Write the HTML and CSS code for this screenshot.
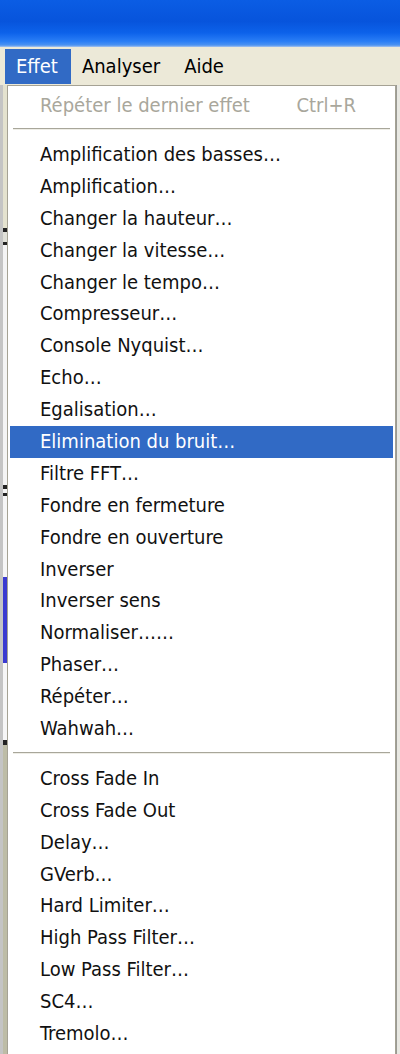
FILE: index.html
```html
<!DOCTYPE html>
<html>
<head>
    <title>Effet</title>
    <link rel="stylesheet" href="styles.css">
</head>
<body>
    <div class="titlebar"></div>

    <!-- Menu bar -->
    <div class="menubar">
        <span class="menubar-item active">Effet</span>
        <span class="menubar-item">Analyser</span>
        <span class="menubar-item">Aide</span>
    </div>

    <div class="workspace">
        <div class="side-left"></div>

        <!-- Effet dropdown -->
        <ul class="menu">
            <li class="menu-item disabled"><span>Répéter le dernier effet</span><span class="shortcut">Ctrl+R</span></li>
            <li class="separator"></li>
            <li class="menu-item">Amplification des basses…</li>
            <li class="menu-item">Amplification…</li>
            <li class="menu-item">Changer la hauteur…</li>
            <li class="menu-item">Changer la vitesse…</li>
            <li class="menu-item">Changer le tempo…</li>
            <li class="menu-item">Compresseur…</li>
            <li class="menu-item">Console Nyquist…</li>
            <li class="menu-item">Echo…</li>
            <li class="menu-item">Egalisation…</li>
            <li class="menu-item selected">Elimination du bruit…</li>
            <li class="menu-item">Filtre FFT…</li>
            <li class="menu-item">Fondre en fermeture</li>
            <li class="menu-item">Fondre en ouverture</li>
            <li class="menu-item">Inverser</li>
            <li class="menu-item">Inverser sens</li>
            <li class="menu-item">Normaliser……</li>
            <li class="menu-item">Phaser…</li>
            <li class="menu-item">Répéter…</li>
            <li class="menu-item">Wahwah…</li>
            <li class="separator"></li>
            <li class="menu-item">Cross Fade In</li>
            <li class="menu-item">Cross Fade Out</li>
            <li class="menu-item">Delay…</li>
            <li class="menu-item">GVerb…</li>
            <li class="menu-item">Hard Limiter…</li>
            <li class="menu-item">High Pass Filter…</li>
            <li class="menu-item">Low Pass Filter…</li>
            <li class="menu-item">SC4…</li>
            <li class="menu-item">Tremolo…</li>
        </ul>

        <div class="side-right"></div>
    </div>
</body>
</html>
```

FILE: styles.css
```css
body {
    margin: 0;
    width: 400px;
    height: 1054px;
    overflow: hidden;
    background-color: #ffffff;
    font-family: "DejaVu Sans Condensed", "DejaVu Sans", sans-serif;
    font-stretch: condensed;
    font-size: 20px;
    color: #111;
}

/* --- Window title bar (only the bottom is visible) --- */
.titlebar {
    height: 47px;
    background: linear-gradient(#0b5de4 0%, #0754dc 45%, #0d62ea 70%, #2a7ef6 88%, #4c93f2 96%, #a8c4ee 100%);
}

/* --- Menu bar --- */
.menubar {
    display: flex;
    height: 35px;
    padding: 2px 0 1px 5px;
    background-color: #ece9d8;
}

.menubar-item {
    padding: 0 13px 0 11px;
    line-height: 35px;
    color: #000;
}

.menubar-item.active {
    background-color: #316ac5;
    color: #fff;
}

/* --- Area under the menu bar --- */
.workspace {
    display: flex;
    height: 969px;
}

.side-left {
    width: 7px;
    flex-shrink: 0;
    background:
        linear-gradient(to right, #c4c4c4 0 3px, transparent 3px),
        linear-gradient(#e4e2cf 0, #e4e2cf 143px, #222 143px, #222 147px, #e0e0d8 147px, #e0e0d8 157px, #222 157px, #222 160px,
            #f4f4f4 160px, #f4f4f4 400px, #222 400px, #222 404px, #f4f4f4 404px, #f4f4f4 408px, #222 408px, #222 411px,
            #f6f6f6 411px, #f6f6f6 492px, #3a3ad0 492px, #3a3ad0 578px, #f6f6f6 578px, #f6f6f6 655px,
            #222 655px, #222 660px, #bdbca6 660px);
}

.side-right {
    width: 4px;
    flex-shrink: 0;
    background:
        linear-gradient(to right, #9a9a94 0 1px, #e8e8e2 1px),
        #e8e8e2;
}

/* --- Dropdown menu --- */
.menu {
    list-style: none;
    margin: 0;
    width: 383px;
    padding: 3px 2px 0 2px;
    background-color: #fff;
    border: 1px solid #a5a294;
    border-bottom: 0;
}

.menu-item {
    display: flex;
    height: 31.9px;
    line-height: 31.9px;
    padding: 0 37px 0 30px;
    white-space: nowrap;
}

.menu-item.disabled {
    height: 32px;
    line-height: 32px;
    color: #a9a79c;
}

.shortcut {
    margin-left: auto;
}

.menu-item.selected {
    background-color: #316ac5;
    color: #fff;
}

.separator {
    height: 18px;
    box-sizing: border-box;
    padding-top: 7px;
    margin: 0 3px;
}

.separator::before {
    content: "";
    display: block;
    height: 1px;
    background-color: #a8a69a;
    border-bottom: 1px solid #eeede6;
}
```
